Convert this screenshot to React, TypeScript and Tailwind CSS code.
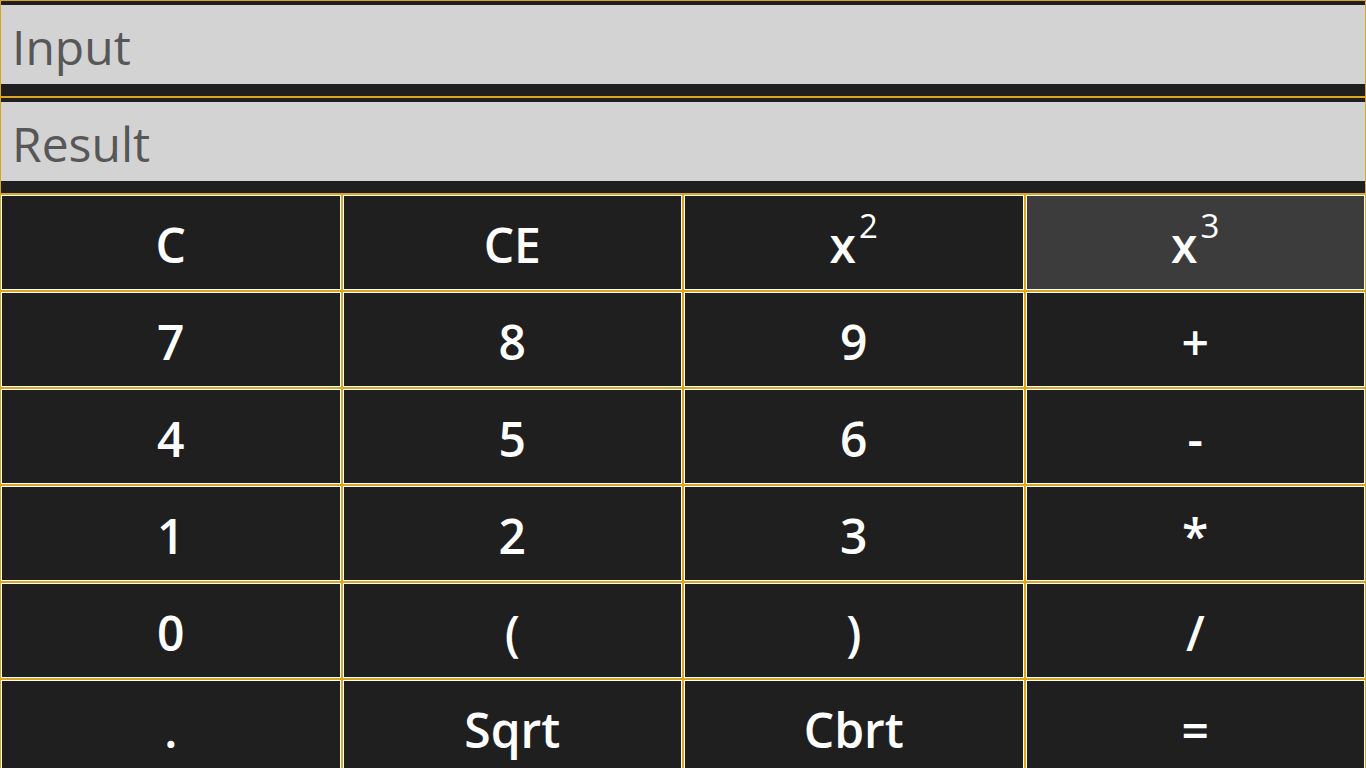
import React from "react";

const font = { fontFamily: '"Open Sans", "Noto Sans", "Liberation Sans", sans-serif' };

type Key = { label: React.ReactNode; hover?: boolean };

const Pow = ({ n }: { n: string }) => (
  <span className="inline-flex items-baseline">
    x
    <span className="text-[33px] font-medium relative -top-[25px] ml-[3px]">{n}</span>
  </span>
);

const keys: Key[] = [
  { label: "C" },
  { label: "CE" },
  { label: <Pow n="2" /> },
  { label: <Pow n="3" />, hover: true },
  { label: "7" },
  { label: "8" },
  { label: "9" },
  { label: "+" },
  { label: "4" },
  { label: "5" },
  { label: "6" },
  { label: "-" },
  { label: "1" },
  { label: "2" },
  { label: "3" },
  { label: "*" },
  { label: "0" },
  { label: "(" },
  { label: ")" },
  { label: "/" },
  { label: "." },
  { label: "Sqrt" },
  { label: "Cbrt" },
  { label: "=" },
];

function Field({ text }: { text: string }) {
  return (
    <div className="h-[97px] border border-[#daa520] bg-[#1f1f1f] pt-[4px] pb-[12px]">
      <div className="h-full bg-[#d3d3d3] flex items-center pl-[11px] pt-[4px] text-[#575757] text-[48px] leading-none">
        {text}
      </div>
    </div>
  );
}

export default function App() {
  return (
    <div className="h-screen overflow-hidden bg-[#1f1f1f]" style={font}>
      <Field text="Input" />
      <Field text="Result" />
      <div className="grid grid-cols-4">
        {keys.map((k, i) => (
          <div key={i} className="h-[97px] border border-[#daa520]">
            <button
              className={
                "h-full w-full border border-white flex items-center justify-center pt-[5px] text-white text-[48px] font-semibold leading-none " +
                (k.hover ? "bg-[#3c3c3c]" : "bg-[#1f1f1f]")
              }
              style={font}
            >
              {k.label}
            </button>
          </div>
        ))}
      </div>
    </div>
  );
}
